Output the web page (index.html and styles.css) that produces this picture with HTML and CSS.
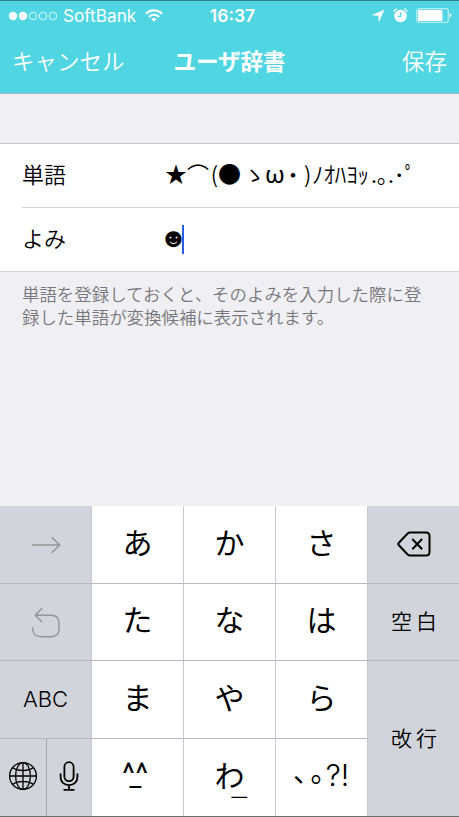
FILE: index.html
```
<!DOCTYPE html>
<html lang="ja">
<head>
<meta charset="utf-8">
<title>ユーザ辞書</title>
<link rel="stylesheet" href="styles.css">
</head>
<body>
<div class="screen">
  <header class="header">
    <div class="status">
      <div class="carrier">
        <svg class="signal" width="50" height="10" viewBox="0 0 50 10"><g fill="#fff"><circle cx="5" cy="5" r="4.2"/><circle cx="15" cy="5" r="4.2"/></g><g fill="none" stroke="#fff" stroke-width=".8"><circle cx="25" cy="5" r="3.8"/><circle cx="35" cy="5" r="3.8"/><circle cx="45" cy="5" r="3.8"/></g></svg>
        <span class="carrier-name">SoftBank</span>
        <svg class="wifi" width="18" height="13" viewBox="0 0 18 13"><g fill="none" stroke="#fff" stroke-width="2.1"><path d="M.9 4.8C5.4.2 12.6.2 17.1 4.8"/><path d="M3.9 7.9c2.9-2.8 7.3-2.8 10.2 0"/></g><path d="M6.2 10c1.6-1.5 4-1.5 5.6 0L9 12.8z" fill="#fff"/></svg>
      </div>
      <span class="time">16:37</span>
      <div class="indicators">
        <svg width="14" height="14" viewBox="0 0 14 14"><path d="M13.5.5 7.8 13.3 7.2 6.8.5 6.3z" fill="#fff"/></svg>
        <svg class="alarm" width="15" height="15" viewBox="0 0 15 15"><circle cx="7.5" cy="8" r="6.2" fill="#fff"/><g fill="none"><path d="M.8 3.9C1.2 2.4 2.3 1.3 3.8.9M14.2 3.9c-.4-1.5-1.5-2.6-3-3" stroke="#fff" stroke-width="1.2"/><path d="M7.7 4.2v4.1H4.8" stroke="#50d5e2" stroke-width="1.2"/></g></svg>
        <svg class="battery" width="36" height="15" viewBox="0 0 36 15"><rect x=".7" y=".7" width="31.6" height="13.6" rx="2.2" fill="none" stroke="#b5edf3" stroke-width="1.3"/><rect x="2" y="2" width="24.5" height="11" rx="1" fill="#fff"/><path d="M33.7 5.3c2.2.5 2.2 3.9 0 4.4z" fill="#fff"/></svg>
      </div>
    </div>
    <nav class="nav">
      <span class="cancel">キャンセル</span>
      <h1 class="title">ユーザ辞書</h1>
      <span class="save">保存</span>
    </nav>
  </header>

  <main class="form">
    <section class="group">
      <div class="row row-word">
        <span class="label">単語</span>
        <span class="value"><span class="star">★</span><span class="arc">⌒</span><span class="open">(</span><span class="disc">●</span><span class="full">ゝ</span><span class="omega">ω</span><span class="dot">・</span><span class="close">)</span><span class="kana">ﾉｵﾊﾖｯ</span><span class="tail">.｡.･ﾟ</span></span>
      </div>
      <div class="row row-reading">
        <span class="label">よみ</span>
        <span class="value"><span class="face">☻</span><i class="caret"></i></span>
      </div>
    </section>
    <p class="note">単語を登録しておくと、そのよみを入力した際に登<br>録した単語が変換候補に表示されます。</p>
  </main>

  <div class="keyboard">
    <div class="key side"><svg width="30" height="18" viewBox="0 0 30 18"><path d="M1 9h28M20.7 1.2 28.8 9l-8.1 7.8" fill="none" stroke="#929497" stroke-width="1.4"/></svg></div>
    <div class="key">あ</div><div class="key">か</div><div class="key">さ</div>
    <div class="key side right backspace"><svg width="34" height="26" viewBox="0 0 34 26"><g fill="none" stroke="#000" stroke-width="2" stroke-linejoin="round"><path d="M12.8 1.5H29c2.2 0 3.5 1.3 3.5 3.5v16c0 2.2-1.3 3.5-3.5 3.5H12.8c-1 0-1.6-.4-2.2-1L1.9 14.3c-.8-.9-.8-1.7 0-2.6l8.7-9.2c.6-.6 1.2-1 2.2-1z"/><path d="m15.3 8 9.8 10.2m0-10.2-9.8 10.2"/></g></svg></div>

    <div class="key side"><svg class="undo" width="30" height="31" viewBox="0 0 30 31"><path d="M11.2 1.2 4.2 8.2l7 6.8M4.2 8.2H20c5.8 0 8 2.4 8 7.8v6c0 5.4-2.2 7.7-8 7.7H10.5c-6.2 0-8.8-2.3-8.8-8.2v-1.3" fill="none" stroke="#929497" stroke-width="1.4"/></svg></div>
    <div class="key">た</div><div class="key">な</div><div class="key">は</div>
    <div class="key side right word">空白</div>

    <div class="key side abc">ABC</div>
    <div class="key">ま</div><div class="key">や</div><div class="key">ら</div>
    <div class="key side right word enter">改行</div>

    <div class="pair">
      <div class="key side globe"><svg width="30" height="30" viewBox="0 0 30 30"><g fill="none" stroke="#000" stroke-width="1.3"><circle cx="15" cy="15" r="13.4"/><ellipse cx="15" cy="15" rx="7.4" ry="13.4"/><path d="M15 1.6v26.8M1.6 15h26.8M4.6 6.8c5.8 3.8 15 3.8 20.8 0M4.6 23.2c5.8-3.8 15-3.8 20.8 0"/></g></svg></div>
      <div class="key side mic"><svg width="20" height="30" viewBox="0 0 20 30"><g fill="none" stroke="#000" stroke-width="1.8"><rect x="5.4" y="1.2" width="9.2" height="19" rx="4.6"/><path d="M1.6 12.5v3.8c0 4.6 3.4 7.8 8.4 7.8s8.4-3.2 8.4-7.8v-3.8M10 24.1v4.5M4.5 28.8h11"/></g></svg></div>
    </div>
    <div class="key emoticon"><span class="eyes">^^</span><span class="mouth">_</span></div>
    <div class="key wa"><span>わ</span><span class="bar">_</span></div>
    <div class="key punct"><span class="comma">､</span><span class="stop">｡</span><span class="marks">?!</span></div>
  </div>
</div>
</body>
</html>
```
FILE: styles.css
```
* { box-sizing: border-box; }
body { margin: 0; font-family: "Noto Sans CJK JP", sans-serif; color: #000; }
svg { display: block; flex: none; }
.screen { width: 459px; height: 817px; display: flex; flex-direction: column; background: #efeff4; overflow: hidden; border-bottom: 1px solid #6c6e72; }

.header { height: 94px; flex: none; background: #50d5e2; border-top: 1px solid #2c7f88; border-bottom: 1px solid #aab9c5; color: #fff; }
.status { height: 29px; display: grid; grid-template-columns: 1fr auto 1fr; align-items: center; padding: 0 7px 0 8px; }
.carrier { display: flex; align-items: center; }
.carrier-name { font: 17.2px/20px Inter, sans-serif; margin-left: 5px; width: 73px; white-space: nowrap; }
.wifi { margin-left: 9px; }
.time { font: 600 17.5px/20px Inter, sans-serif; padding-left: 5px; }
.indicators { display: flex; align-items: center; justify-content: flex-end; }
.alarm { margin-left: 8px; }
.battery { margin-left: 8px; }
.nav { height: 60px; display: grid; grid-template-columns: 1fr auto 1fr; align-items: center; padding: 0 12px 0 12px; font-size: 22.5px; font-weight: 350; line-height: 32px; }
.title { margin: 0; font-size: 22.5px; font-weight: 700; }
.save { text-align: right; }

.form { flex: 1; padding-top: 49px; }
.group { background: #fff; border-top: 1px solid #c8c7cc; border-bottom: 1px solid #d3d2d7; }
.row { height: 64px; margin-left: 22px; padding-bottom: 5px; display: flex; align-items: center; font-size: 22px; line-height: 32px; }
.row-word { height: 63px; }
.row-reading { border-top: 1px solid #d3d2d7; }
.label { width: 143px; font-weight: 350; }
.value { display: flex; align-items: center; white-space: nowrap; font-weight: 350; }
.value span { flex: none; }
.star, .arc, .disc { width: 22px; }
.star { padding-bottom: 3px; }
.open { width: 9px; text-align: right; }
.disc { font-size: 23px; }
.full { width: 24px; padding-left: 3px; }
.omega { width: 18px; margin-left: 1px; padding-top: 4px; font: 24px/32px Roboto, sans-serif; }
.dot { width: 22px; margin-left: -1px; }
.close { width: 8px; }
.kana { font-size: 23px; letter-spacing: -.1px; }
.tail { font-size: 22px; margin-left: 2px; }
.face { font-family: "DejaVu Sans", sans-serif; font-size: 27px; width: 17px; padding-top: 2px; display: flex; justify-content: center; }
.caret { width: 2px; height: 29px; background: #2b5bea; margin-top: 4px; }
.note { margin: 10px 0 0 22px; color: #77777b; font-size: 17.45px; line-height: 23px; font-weight: 350; white-space: nowrap; }

.keyboard { height: 310px; flex: none; display: grid; grid-template-columns: 92px 92px 92px 92px 91px; grid-template-rows: 78px 77px 78px 77px; }
.key { display: flex; align-items: center; justify-content: center; background: #fff; border-right: 1px solid #c7cad4; border-bottom: 1px solid #b5b8c2; font-size: 30px; line-height: 40px; padding-bottom: 8px; }
.side { background: #d1d4db; padding-bottom: 0; }
.right { border-right: 0; }
.backspace { padding: 0 0 1px 0; }
.word { font-size: 21px; letter-spacing: 4px; font-weight: 350; padding-left: 5px; padding-bottom: 4px; }
.enter { grid-row: span 2; }
.abc { font: 350 22px/30px Inter, sans-serif; padding-bottom: 1px; }
.pair { display: grid; grid-template-columns: 47px 45px; }
.pair .key, .emoticon, .wa, .punct, .enter { border-bottom: 0; }
.pair .key { padding-bottom: 3px; }
.globe { border-color: #a7aab2; }
.pair .globe { padding-right: 1px; }
.emoticon { flex-direction: column; padding: 4px 4px 0 0; }
.eyes { font: 30px/22px Roboto, sans-serif; letter-spacing: .6px; }
.mouth { height: 18px; font: 26px/2px Inter, sans-serif; margin-top: -9px; margin-bottom: 2px; }
.wa { position: relative; }
.bar { position: absolute; left: 47px; top: 22px; font-weight: 300; }
.punct { font-size: 28px; padding-bottom: 6px; }
.comma, .stop { width: 15px; margin-top: -10px; }
.comma { width: 17px; }
.marks { font: 350 30px/40px Inter, sans-serif; }
```
